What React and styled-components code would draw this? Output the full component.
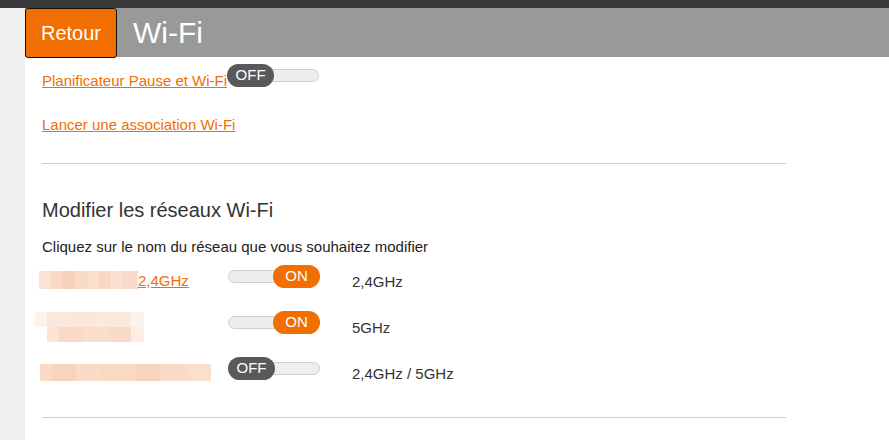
import React from 'react';
import styled, { createGlobalStyle } from 'styled-components';

const GlobalStyle = createGlobalStyle`
  body {
    margin: 0;
    background: #fff;
    font-family: "Liberation Sans", Arial, sans-serif;
    color: #333;
  }
`;

const Page = styled.div`
  width: 889px;
  height: 440px;
  overflow: hidden;
  display: flex;
  flex-direction: column;
`;

const TopBar = styled.div`
  height: 8px;
  background: #3a3a3a;
  flex-shrink: 0;
`;

const Body = styled.div`
  flex: 1;
  display: flex;
`;

const Sidebar = styled.div`
  width: 25px;
  background: #efefef;
  flex-shrink: 0;
`;

const Main = styled.div`
  flex: 1;
  display: flex;
  flex-direction: column;
`;

const Header = styled.div`
  height: 49px;
  background: #999;
  display: flex;
  align-items: flex-start;
`;

const BackButton = styled.button`
  width: 92px;
  height: 50px;
  box-sizing: border-box;
  background: #f16e00;
  border: 1px solid #111;
  border-radius: 3px;
  color: #fff;
  font-family: "Liberation Sans", Arial, sans-serif;
  font-size: 20px;
  padding: 0;
  cursor: pointer;
`;

const Title = styled.h1`
  margin: 0 0 0 16px;
  font-weight: normal;
  font-size: 30px;
  line-height: 49px;
  color: #fff;
`;

const Content = styled.div`
  padding: 7px 0 0 17px;
  width: 744px;
`;

const Link = styled.a`
  color: #f16e00;
  text-decoration: underline;
  font-size: 15px;
  line-height: 17px;
  cursor: pointer;
`;

const LinkRow = styled.div`
  display: flex;
  align-items: flex-start;
  margin-top: ${p => p.$top || 0}px;

  & > ${Link} {
    margin-top: ${p => p.$textTop || 0}px;
  }
`;

const Track = styled.div`
  position: relative;
  width: 92px;
  height: 23px;
  flex-shrink: 0;
  display: flex;
  align-items: center;
  justify-content: ${p => (p.$on ? 'flex-end' : 'flex-start')};

  &::before {
    content: '';
    position: absolute;
    left: 0;
    right: 0;
    top: 5px;
    height: 13px;
    box-sizing: border-box;
    background: #eee;
    border: 1px solid #cfcfcf;
    border-radius: 7px;
  }
`;

const Knob = styled.span`
  position: relative;
  width: 47px;
  height: 23px;
  border-radius: 12px;
  background: ${p => (p.$on ? '#f16e00' : '#595959')};
  color: #fff;
  font-size: 15px;
  line-height: 22px;
  text-align: center;
`;

const Toggle = ({ on }) => (
  <Track $on={on}>
    <Knob $on={on}>{on ? 'ON' : 'OFF'}</Knob>
  </Track>
);

const Separator = styled.hr`
  margin: ${p => p.$top}px 0 0 0;
  border: 0;
  height: 1px;
  background: #cccccc;
`;

const Heading = styled.h2`
  margin: 34px 0 0 0;
  font-weight: normal;
  font-size: 20px;
  line-height: 24px;
  color: #333;
`;

const Hint = styled.p`
  margin: 16px 0 0 0;
  font-size: 15px;
  line-height: 17px;
  color: #222;
`;

const Networks = styled.div`
  margin-top: 10px;
  display: flex;
  flex-direction: column;
`;

const NetRow = styled.div`
  height: 46px;
  display: flex;
  align-items: flex-start;
`;

const NameCell = styled.div`
  width: 186px;
  flex-shrink: 0;
  display: flex;
  align-items: center;
  height: 30px;
  margin-top: ${p => p.$top || 0}px;
`;

const Masked = styled.span`
  display: inline-block;
  width: ${p => p.$w}px;
  height: ${p => p.$h}px;
  margin-left: ${p => p.$shift || 0}px;
  background: ${p => p.$bg};
`;

const Band = styled.span`
  margin: 8px 0 0 32px;
  font-size: 15px;
  line-height: 17px;
  color: #333;
`;

const mosaicA = `linear-gradient(90deg,
  #fbe3d3 0 12px, #f9d9c4 12px 24px, #f8d2b8 24px 36px, #f9dac6 36px 48px,
  #fadfcd 48px 60px, #f9d8c3 60px 72px, #fbe1d0 72px 84px, #fadbc8 84px 99px)`;

const mosaicB = `linear-gradient(180deg,
  transparent 0 15px, #fff 15px 30px),
  linear-gradient(90deg,
  #fdf1e9 0 12px, #fbe8dc 12px 36px, #fbe6d9 36px 60px, #fbe9dd 60px 96px, #fdf3ee 96px 109px)`;

const mosaicBLow = `linear-gradient(90deg,
  #fbe4d5 0 12px, #f9dac7 12px 36px, #fadecd 36px 60px, #f9dbc8 60px 84px, #fdeee5 84px 97px)`;

const mosaicC = `linear-gradient(90deg,
  #fadac6 0 12px, #f9d3bb 12px 36px, #fadbc7 36px 60px, #fad9c4 60px 96px,
  #f9d4bd 96px 120px, #fadbc8 120px 150px, #fbdfcd 150px 171px)`;

const LowStrip = styled.span`
  position: absolute;
  left: 12px;
  bottom: 0;
  width: 97px;
  height: 15px;
  background: ${mosaicBLow};
`;

const MaskedBlock = styled.span`
  position: relative;
  display: inline-block;
  width: 109px;
  height: 30px;
  margin-left: -7px;
  background: ${mosaicB};
`;

export default function App() {
  return (
    <>
      <GlobalStyle />
      <Page>
        <TopBar />
        <Body>
          <Sidebar />
          <Main>
            <Header>
              <BackButton>Retour</BackButton>
              <Title>Wi-Fi</Title>
            </Header>
            <Content>
              <LinkRow $textTop={8}>
                <Link>Planificateur Pause et Wi-Fi</Link>
                <Toggle on={false} />
              </LinkRow>
              <LinkRow $top={27}>
                <Link>Lancer une association Wi-Fi</Link>
              </LinkRow>
              <Separator $top={30} />
              <Heading>Modifier les réseaux Wi-Fi</Heading>
              <Hint>Cliquez sur le nom du réseau que vous souhaitez modifier</Hint>
              <Networks>
                <NetRow>
                  <NameCell $top={0}>
                    <Masked $w={99} $h={18} $shift={-3} $bg={mosaicA} />
                    <Link>2,4GHz</Link>
                  </NameCell>
                  <Toggle on />
                  <Band>2,4GHz</Band>
                </NetRow>
                <NetRow>
                  <NameCell $top={1}>
                    <MaskedBlock>
                      <LowStrip />
                    </MaskedBlock>
                  </NameCell>
                  <Toggle on />
                  <Band>5GHz</Band>
                </NetRow>
                <NetRow>
                  <NameCell $top={0}>
                    <Masked $w={171} $h={17} $shift={-2} $bg={mosaicC} />
                  </NameCell>
                  <Toggle on={false} />
                  <Band>2,4GHz / 5GHz</Band>
                </NetRow>
              </Networks>
              <Separator $top={14} />
            </Content>
          </Main>
        </Body>
      </Page>
    </>
  );
}
